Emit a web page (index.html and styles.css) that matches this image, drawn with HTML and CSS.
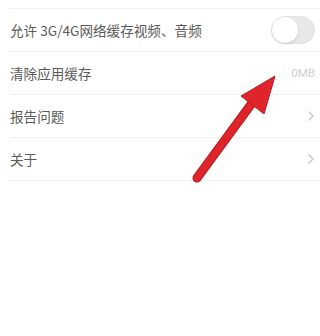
FILE: index.html
```html
<!DOCTYPE html>
<html lang="zh">
<head>
<meta charset="utf-8">
<link rel="stylesheet" href="styles.css">
</head>
<body>
<div class="page">
  <div class="list">
    <div class="row">
      <span class="label">允许 3G/4G网络缓存视频、音频</span>
      <span class="toggle"><span class="knob"></span></span>
    </div>
    <div class="row">
      <span class="label">清除应用缓存</span>
      <span class="value">0MB</span>
    </div>
    <div class="row">
      <span class="label">报告问题</span>
      <svg class="chev" viewBox="0 0 6 10" width="6" height="10"><path d="M1 1l4 4-4 4" fill="none" stroke="#c4c4c4" stroke-width="1.3" stroke-linecap="round" stroke-linejoin="round"/></svg>
    </div>
    <div class="row">
      <span class="label">关于</span>
      <svg class="chev" viewBox="0 0 6 10" width="6" height="10"><path d="M1 1l4 4-4 4" fill="none" stroke="#c4c4c4" stroke-width="1.3" stroke-linecap="round" stroke-linejoin="round"/></svg>
    </div>
  </div>
  <svg class="arrow" viewBox="0 0 320 336" width="320" height="336">
    <line x1="197" y1="178" x2="255" y2="99" stroke="#b81c22" stroke-width="9" stroke-linecap="round"/>
    <line x1="197" y1="178" x2="255" y2="99" stroke="#e0242b" stroke-width="7" stroke-linecap="round"/>
    <polygon points="275,76 241,96 264,114" fill="#e0242b" stroke="#b81c22" stroke-width="1" stroke-linejoin="round"/>
  </svg>
</div>
</body>
</html>
```

FILE: styles.css
```css
html, body {
  margin: 0;
  padding: 0;
  background: #ffffff;
}
.page {
  position: relative;
  width: 320px;
  height: 336px;
  overflow: hidden;
  font-family: "Noto Sans CJK SC", "Noto Sans", sans-serif;
}
.list {
  padding-top: 8px;
}
.list::before {
  content: "";
  display: block;
  height: 1px;
  margin-left: 10px;
  background: #f0f0f0;
}
.row {
  display: flex;
  align-items: center;
  justify-content: space-between;
  height: 42px;
  margin-left: 10px;
  padding-right: 5px;
  border-bottom: 1px solid #f0f0f0;
}
.label {
  font-size: 13.6px;
  color: #5a5a5a;
}
.value {
  font-family: "Roboto", "Noto Sans", sans-serif;
  font-size: 11.5px;
  color: #cfcfcf;
}
.toggle {
  position: relative;
  width: 44px;
  height: 28px;
  border-radius: 14px;
  background: #e8e8e8;
  box-sizing: border-box;
  border: 1px solid #e2e2e2;
}
.knob {
  position: absolute;
  left: 0;
  top: 0;
  width: 26px;
  height: 26px;
  border-radius: 50%;
  background: #ffffff;
  box-shadow: 0 1px 2px rgba(0,0,0,0.15);
}
.chev {
  margin-right: 1px;
}
.arrow {
  position: absolute;
  left: 0;
  top: 0;
}
```
